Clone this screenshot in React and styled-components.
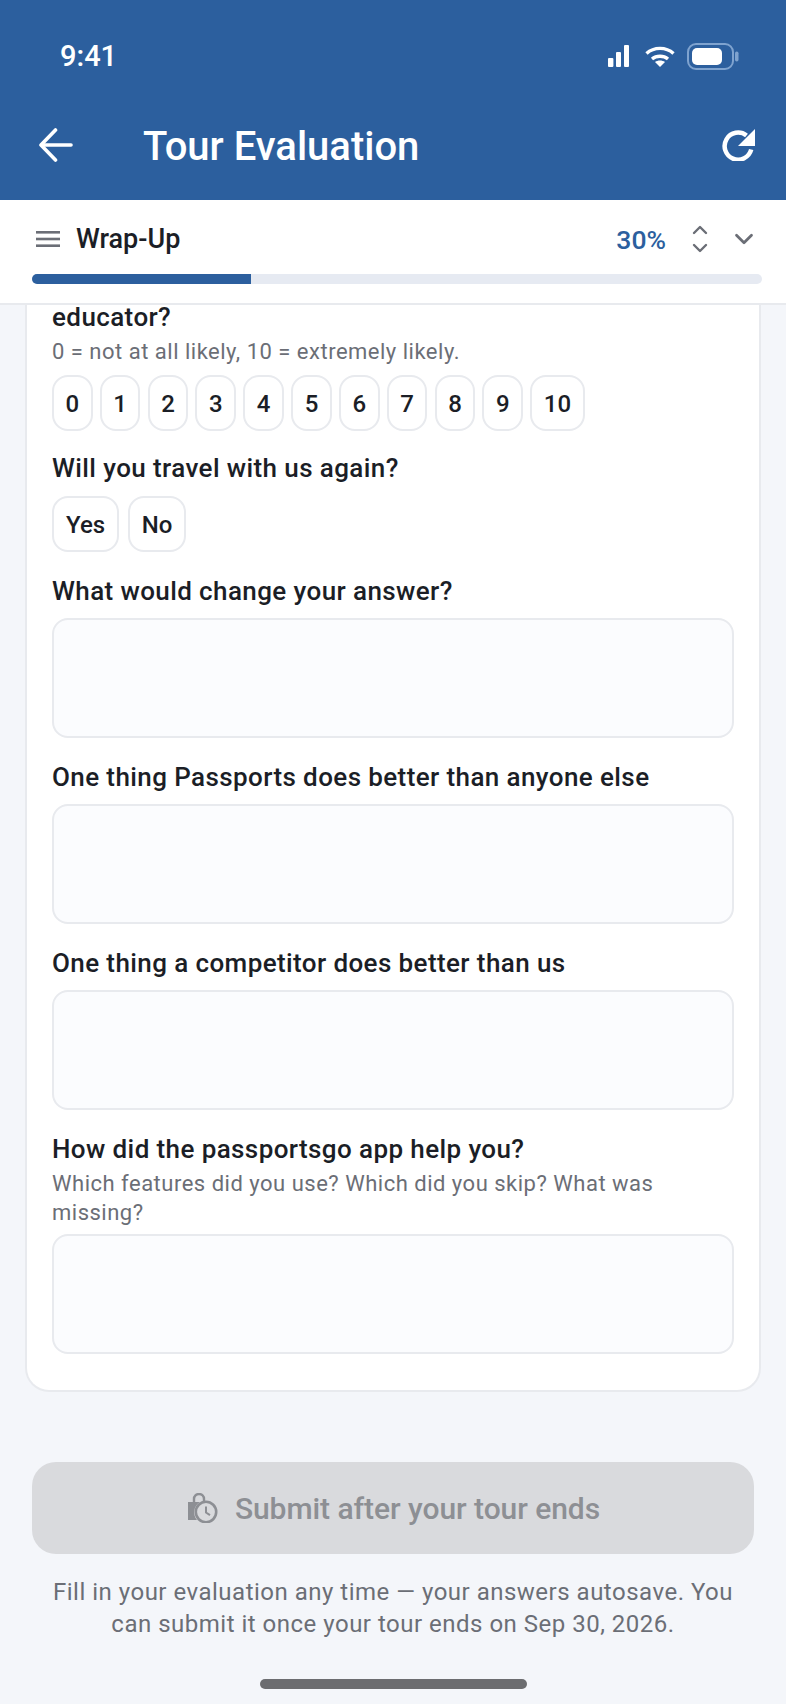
import React from "react";
import styled, { createGlobalStyle } from "styled-components";
import { ChevronUp, ChevronDown } from "lucide-react";

const GlobalStyle = createGlobalStyle`
  html, body {
    margin: 0;
    padding: 0;
    background: #f4f6fa;
  }
  * {
    box-sizing: border-box;
  }
`;

const Screen = styled.div`
  width: 786px;
  height: 1704px;
  display: flex;
  flex-direction: column;
  overflow: hidden;
  background: #f4f6fa;
  font-family: Roboto, "Noto Sans", sans-serif;
`;

const Header = styled.header`
  height: 200px;
  flex: none;
  background: #2c5f9e;
  color: #fff;
  display: flex;
  flex-direction: column;
`;

const StatusBar = styled.div`
  height: 56px;
  margin-top: 28px;
  padding: 0 47px 0 60px;
  display: flex;
  align-items: center;
  justify-content: space-between;
`;

const Time = styled.span`
  font-size: 29px;
  font-weight: 500;
`;

const StatusIcons = styled.div`
  display: flex;
  align-items: center;
  gap: 12px;

  svg:first-child {
    margin-right: 4px;
  }
`;

const TitleRow = styled.div`
  height: 60px;
  margin-top: 31px;
  padding: 0 30px 0 39px;
  display: flex;
  align-items: center;
`;

const Title = styled.h1`
  margin: 0 0 0 70px;
  padding-top: 3px;
  flex: 1;
  font-size: 40px;
  font-weight: 500;
  line-height: 1;
`;

const SectionBar = styled.div`
  height: 105px;
  flex: none;
  background: #fff;
  border-bottom: 2px solid #e8eaee;
  padding: 19px 24px 0 32px;
`;

const SectionRow = styled.div`
  height: 40px;
  display: flex;
  align-items: center;
`;

const MenuButton = styled.svg`
  margin-left: 4px;
  flex: none;
`;

const SectionName = styled.span`
  margin-left: 16px;
  flex: 1;
  font-size: 27px;
  font-weight: 500;
  color: #1b1e26;
`;

const Percent = styled.span`
  font-size: 26.5px;
  font-weight: 500;
  color: #2c5f9e;
  margin-right: 22px;
`;

const Stepper = styled.div`
  display: flex;
  flex-direction: column;
  color: #6b6e76;
  margin-right: 17px;

  svg + svg {
    margin-top: -6px;
  }
`;

const Collapse = styled(ChevronDown)`
  color: #6b6e76;
  margin-right: 3px;
`;

const Track = styled.div`
  height: 10px;
  margin-top: 15px;
  border-radius: 5px;
  background: #e6eaf2;
  overflow: hidden;
`;

const Fill = styled.div`
  height: 100%;
  background: #2c5f9e;
`;

const Scroller = styled.main`
  flex: 1;
  min-height: 0;
  padding: 0 25px;
  display: flex;
  flex-direction: column;
`;

const Card = styled.section`
  flex: none;
  background: #fff;
  border: 2px solid #e8eaee;
  border-top: none;
  border-radius: 0 0 24px 24px;
  padding: 0 25px 36px;
`;

const Label = styled.div`
  font-size: 26px;
  font-weight: 500;
  line-height: 32px;
  letter-spacing: 0.4px;
  color: #1b1e26;
  margin-top: ${(p) => p.$top}px;
`;

const Hint = styled.div`
  font-size: 22px;
  line-height: 29px;
  letter-spacing: 0.5px;
  color: #6b6e76;
  margin-top: 4px;
`;

const Options = styled.div`
  display: flex;
  gap: ${(p) => p.$gap}px;
  margin-top: ${(p) => p.$top}px;
`;

const Option = styled.button`
  height: 56px;
  padding: 2px ${(p) => (p.$word ? 12 : 11.5)}px 0;
  border: 2px solid #e8eaee;
  border-radius: 16px;
  background: #fff;
  color: #1b1e26;
  font-family: inherit;
  font-size: 24px;
  font-weight: 500;
  display: flex;
  align-items: center;
  justify-content: center;
`;

const Answer = styled.textarea`
  display: block;
  width: 100%;
  height: 120px;
  margin-top: ${(p) => p.$top}px;
  border: 2px solid #e8eaee;
  border-radius: 16px;
  background: #fbfcfe;
  resize: none;
  outline: none;
`;

const Footer = styled.footer`
  padding: 70px 7px 0 7px;
`;

const Submit = styled.button`
  width: 100%;
  height: 92px;
  border: none;
  border-radius: 24px;
  padding: 0 0 0 2px;
  background: #d9dadd;
  color: #8d8f94;
  font-family: inherit;
  font-size: 30px;
  font-weight: 500;
  letter-spacing: -0.05px;
  display: flex;
  align-items: center;
  justify-content: center;
  gap: 17px;
`;

const Note = styled.p`
  margin: 22px 0 0;
  text-align: center;
  font-size: 24px;
  line-height: 32px;
  letter-spacing: 0.5px;
  color: #6b6e76;
`;

const HomeBar = styled.div`
  width: 267px;
  height: 10px;
  margin: 39px auto 0;
  border-radius: 5px;
  background: #6c6d70;
`;

const SignalIcon = () => (
  <svg width="21" height="22" viewBox="0 0 21 22" fill="#fff">
    <rect x="0" y="13" width="5.4" height="9" rx="1" />
    <rect x="8" y="7" width="5" height="15" rx="1" />
    <rect x="16" y="0" width="5" height="22" rx="1" />
  </svg>
);

const WifiIcon = () => (
  <svg width="30" height="21" viewBox="0 0 30 21" fill="none" stroke="#fff" strokeWidth="3.4">
    <path d="M1.5 7.5C9 0.7 21 0.7 28.5 7.5" />
    <path d="M7 13C11.4 9.3 18.6 9.3 23 13" />
    <path d="M15 21l-5-5c2.8-2 7.2-2 10 0z" fill="#fff" stroke="none" />
  </svg>
);

const BatteryIcon = () => (
  <svg width="52" height="27" viewBox="0 0 52 27">
    <rect x="1" y="1" width="45" height="25" rx="8" fill="none" stroke="#7fa3cf" strokeWidth="2" />
    <rect x="5" y="5" width="30" height="17" rx="5" fill="#fff" />
    <rect x="48" y="8.5" width="3.5" height="10" rx="1.7" fill="#7fa3cf" />
  </svg>
);

const BackIcon = () => (
  <svg width="34" height="34" viewBox="0 0 34 34" fill="none" stroke="#fff" strokeWidth="3.6" strokeLinecap="round" strokeLinejoin="round">
    <path d="M16.5 2L2 17l14.5 15" />
    <path d="M3 17h29" />
  </svg>
);

const ReloadIcon = () => (
  <svg width="34" height="32" viewBox="0 0 34 32" fill="none">
    <path d="M29.2 20.5A13.5 13.5 0 1 1 24.5 6.5" stroke="#fff" strokeWidth="4.5" />
    <path d="M33 0v17H16z" fill="#fff" />
  </svg>
);

const MenuIcon = () => (
  <MenuButton width="24" height="16" viewBox="0 0 24 16" fill="#6b6e76">
    <rect x="0" y="0" width="24" height="2.6" />
    <rect x="0" y="6.7" width="24" height="2.6" />
    <rect x="0" y="13.4" width="24" height="2.6" />
  </MenuButton>
);

const LockedIcon = () => (
  <svg width="30" height="30" viewBox="0 0 30 30" fill="none" stroke="#8d8f94">
    <path d="M6 9.5V6a5 5 0 0 1 10 0v2" strokeWidth="2.4" />
    <path d="M0 9h12a12 12 0 0 0-3 18H0z" fill="#8d8f94" stroke="none" />
    <circle cx="18" cy="19" r="10.2" strokeWidth="2.6" />
    <path d="M18 13.5V19.5l4 2.6" strokeWidth="2" />
  </svg>
);

const SCALE = ["0", "1", "2", "3", "4", "5", "6", "7", "8", "9", "10"];

export default function App() {
  return (
    <Screen>
      <GlobalStyle />
      <Header>
        <StatusBar>
          <Time>9:41</Time>
          <StatusIcons>
            <SignalIcon />
            <WifiIcon />
            <BatteryIcon />
          </StatusIcons>
        </StatusBar>
        <TitleRow>
          <BackIcon />
          <Title>Tour Evaluation</Title>
          <ReloadIcon />
        </TitleRow>
      </Header>

      <SectionBar>
        <SectionRow>
          <MenuIcon />
          <SectionName>Wrap-Up</SectionName>
          <Percent>30%</Percent>
          <Stepper>
            <ChevronUp size={24} strokeWidth={2.4} />
            <ChevronDown size={24} strokeWidth={2.4} />
          </Stepper>
          <Collapse size={30} strokeWidth={2.2} />
        </SectionRow>
        <Track>
          <Fill style={{ width: "30%" }} />
        </Track>
      </SectionBar>

      <Scroller>
        <Card>
          <Label $top={-4}>educator?</Label>
          <Hint>0 = not at all likely, 10 = extremely likely.</Hint>
          <Options $top={9} $gap={7.2}>
            {SCALE.map((n) => (
              <Option key={n}>{n}</Option>
            ))}
          </Options>
          <Label $top={21}>Will you travel with us again?</Label>
          <Options $top={12} $gap={8.6}>
            <Option $word>Yes</Option>
            <Option $word>No</Option>
          </Options>
          <Label $top={23}>What would change your answer?</Label>
          <Answer $top={11} />
          <Label $top={23}>One thing Passports does better than anyone else</Label>
          <Answer $top={11} />
          <Label $top={23}>One thing a competitor does better than us</Label>
          <Answer $top={11} />
          <Label $top={23}>How did the passportsgo app help you?</Label>
          <Hint>Which features did you use? Which did you skip? What was missing?</Hint>
          <Answer $top={7} />
        </Card>

        <Footer>
          <Submit>
            <LockedIcon />
            Submit after your tour ends
          </Submit>
          <Note>
            Fill in your evaluation any time — your answers autosave. You can submit it once your tour
            ends on Sep 30, 2026.
          </Note>
        </Footer>
        <HomeBar />
      </Scroller>
    </Screen>
  );
}
